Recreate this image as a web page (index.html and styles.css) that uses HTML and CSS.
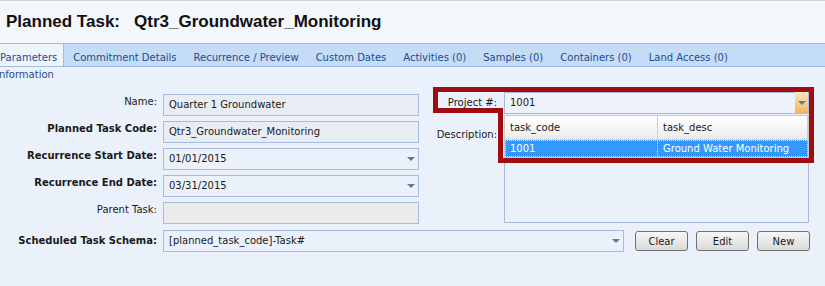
FILE: index.html
```html
<!DOCTYPE html>
<html lang="en">
<head>
    <meta charset="UTF-8">
    <title>Planned Task</title>
    <link rel="stylesheet" href="styles.css">
</head>
<body>
    <div class="page">
        <div class="title-bar">
            <h1>Planned Task:<span class="task-name">Qtr3_Groundwater_Monitoring</span></h1>
        </div>

        <div class="tabs">
            <div class="tab active">Parameters</div>
            <div class="tab">Commitment Details</div>
            <div class="tab">Recurrence / Preview</div>
            <div class="tab">Custom Dates</div>
            <div class="tab">Activities (0)</div>
            <div class="tab">Samples (0)</div>
            <div class="tab">Containers (0)</div>
            <div class="tab">Land Access (0)</div>
        </div>

        <div class="section-label">Information</div>

        <div class="form">
            <div class="form-top">
                <div class="fields-left">
                    <label class="lbl">Name:</label>
                    <div class="field text">Quarter 1 Groundwater</div>

                    <label class="lbl bold">Planned Task Code:</label>
                    <div class="field text">Qtr3_Groundwater_Monitoring</div>

                    <label class="lbl bold">Recurrence Start Date:</label>
                    <div class="field combo">01/01/2015<span class="arrow"></span></div>

                    <label class="lbl bold">Recurrence End Date:</label>
                    <div class="field combo">03/31/2015<span class="arrow"></span></div>

                    <label class="lbl">Parent Task:</label>
                    <div class="field disabled"></div>
                </div>

                <div class="fields-right">
                    <label class="lbl-right">Project #:</label>
                    <div class="project-wrap">
                        <div class="field combo project">1001<span class="arrow-btn"><span class="arrow"></span></span></div>

                        <!-- lookup list opened under the project box -->
                        <div class="lookup">
                            <div class="lookup-head">
                                <div class="cell col-code">task_code</div>
                                <div class="cell col-desc">task_desc</div>
                            </div>
                            <div class="lookup-row selected">
                                <div class="cell col-code">1001</div>
                                <div class="cell col-desc">Ground Water Monitoring</div>
                            </div>
                        </div>
                    </div>

                    <label class="lbl-right desc-label">Description:</label>
                    <div class="field memo"></div>
                </div>
            </div>

            <div class="schema-row">
                <label class="lbl bold">Scheduled Task Schema:</label>
                <div class="field combo schema">[planned_task_code]-Task#<span class="arrow"></span></div>
                <div class="buttons">
                    <button class="btn">Clear</button>
                    <button class="btn">Edit</button>
                    <button class="btn">New</button>
                </div>
            </div>
        </div>

        <svg class="highlight" width="825" height="286" viewBox="0 0 825 286">
            <path d="M435.5 89.5 H811.5 V160.5 H500.5 V110.5 H435.5 Z" fill="none" stroke="#a10c10" stroke-width="5"/>
        </svg>
    </div>
</body>
</html>
```

FILE: styles.css
```css
body {
    margin: 0;
    background: #eaf1fb;
    font-family: "DejaVu Sans", Verdana, sans-serif;
    font-size: 10px;
    color: #1a1a1a;
}
.page {
    position: relative;
    width: 825px;
    height: 286px;
    overflow: hidden;
}
.title-bar {
    height: 42px;
    border-top: 1px solid #cdd5e0;
    background: #f3f6fb;
    padding-left: 6px;
}
h1 {
    margin: 0;
    font-family: "Liberation Sans", Arial, sans-serif;
    font-size: 17px;
    font-weight: bold;
    line-height: 42px;
    color: #111;
}
.task-name {
    margin-left: 14px;
}
.tabs {
    display: flex;
    height: 22px;
    margin-left: -9px;
    border-top: 1px solid #a3bcdc;
    border-bottom: 1px solid #a3bcdc;
    background: #c5dcf7;
}
.tab {
    padding: 6px 8px 0 9px;
    line-height: 16px;
    color: #1c4c8c;
    white-space: nowrap;
}
.tab.active {
    padding-right: 6px;
    background: #eef4fc;
    border-right: 1px solid #a3bcdc;
}
.section-label {
    padding-top: 1px;
    line-height: 14px;
    color: #1c4c8c;
    text-indent: -4px;
}
.form {
    padding-top: 10px;
}
.form-top {
    display: flex;
}
.fields-left {
    display: grid;
    grid-template-columns: 157px 256px;
    grid-auto-rows: 22px;
    column-gap: 6px;
    row-gap: 5px;
    margin-top: 2px;
}
.lbl {
    text-align: right;
    line-height: 16px;
    white-space: nowrap;
}
.bold {
    font-weight: bold;
}
.field {
    box-sizing: border-box;
    height: 22px;
    border: 1px solid #a7bcd9;
    padding: 0 5px;
    line-height: 20px;
    white-space: nowrap;
}
.field.text {
    background: #e8edf4;
}
.field.disabled {
    background: #ebebeb;
}
.combo {
    display: flex;
    justify-content: space-between;
    align-items: center;
    padding-right: 3px;
}
.arrow {
    width: 0;
    height: 0;
    border-left: 4px solid transparent;
    border-right: 4px solid transparent;
    border-top: 4px solid #5d7aa3;
}
.fields-right {
    display: grid;
    grid-template-columns: 77px 305px;
    column-gap: 7px;
    row-gap: 5px;
    margin-left: 1px;
    align-items: start;
}
.lbl-right {
    text-align: right;
    line-height: 22px;
    white-space: nowrap;
}
.desc-label {
    padding-top: 7px;
    line-height: 16px;
}
.project-wrap {
    position: relative;
}
.project {
    padding-right: 0;
    background: #eef3fb;
}
.arrow-btn {
    display: flex;
    align-items: center;
    justify-content: center;
    width: 13px;
    height: 21px;
    margin-top: -1px;
    background: linear-gradient(#fde6bb, #f5b559);
}
.memo {
    height: 103px;
}
.lookup {
    position: absolute;
    top: 23px;
    left: 0;
    width: 305px;
    background: #fff;
    border: 1px solid #c9c9c9;
    box-sizing: border-box;
}
.lookup-head,
.lookup-row {
    display: flex;
}
.lookup-head .cell {
    line-height: 23px;
    background: linear-gradient(#ffffff, #ececec);
    border-right: 1px solid #cfcfcf;
    border-bottom: 1px solid #d6d6d6;
    color: #222;
}
.cell {
    padding-left: 5px;
    box-sizing: border-box;
    white-space: nowrap;
}
.col-code {
    width: 153px;
}
.col-desc {
    flex: 1;
}
.lookup-row.selected {
    background: #3399ff;
    color: #fff;
    line-height: 15px;
    outline: 1px dotted #cde4ff;
    outline-offset: -1px;
    padding: 1px 0;
}
.lookup-row.selected .col-code {
    border-right: 1px dotted #cde4ff;
}
.schema-row {
    display: flex;
    align-items: center;
    margin-top: 6px;
}
.schema-row .lbl {
    width: 157px;
    margin-right: 6px;
}
.schema {
    width: 461px;
    margin-right: 11px;
}
.buttons {
    display: flex;
    gap: 8px;
}
.btn {
    width: 53px;
    height: 20px;
    padding: 0;
    border: 1px solid #707070;
    border-radius: 3px;
    background: linear-gradient(#f7f7f7, #dadada);
    font-family: "DejaVu Sans", Verdana, sans-serif;
    font-size: 10px;
    color: #1a1a1a;
}
.highlight {
    position: absolute;
    top: 0;
    left: 0;
    pointer-events: none;
}
```
